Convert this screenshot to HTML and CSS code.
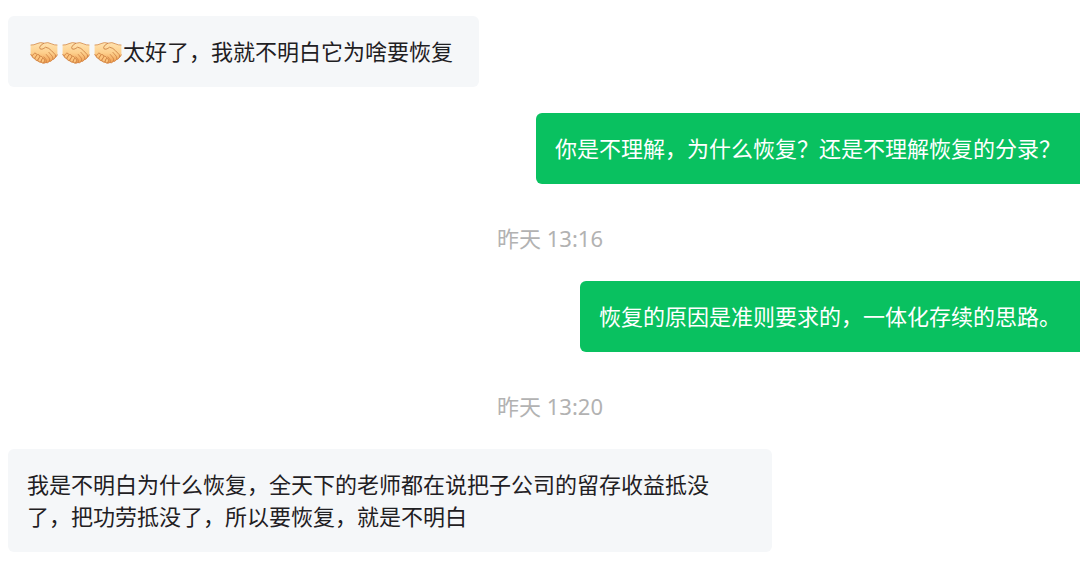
FILE: index.html
```html
<!DOCTYPE html>
<html lang="zh-CN">
<head>
  <meta charset="UTF-8" />
  <meta name="viewport" content="width=device-width, initial-scale=1.0"/>
  <title>聊天记录</title>
  <link rel="stylesheet" href="styles.css">
</head>
<body>
  <!-- handshake emoji, reused in messages -->
  <svg class="defs" width="0" height="0" aria-hidden="true">
    <defs>
      <linearGradient id="skin" x1="0" y1="0" x2="0" y2="1">
        <stop offset="0" stop-color="#ffe3b0"/>
        <stop offset="0.5" stop-color="#fdcf8c"/>
        <stop offset="1" stop-color="#f09a4a"/>
      </linearGradient>
    </defs>
    <symbol id="handshake" viewBox="0 0 28 22">
      <path d="M.6 3 Q4 3.2 7 1.6 Q10.5 -.2 14 1.2 Q18 -.2 21.5 1.8 Q24.2 3.2 27.4 3 V12.5 Q26.8 14.8 25 15.6 Q24.4 17.6 22.4 17.6 Q21.4 19.8 19.2 19.4 Q18 21.4 15.8 20.6 Q13.8 21.8 12.2 20.8 Q10 21.4 9 19.6 Q6.6 19.8 6 17.4 Q3.6 17.4 3.4 15 Q1.2 14.4 .6 12 Z" fill="url(#skin)"/>
      <path d="M.6 3 Q4 3.2 7 1.6 Q10.5 -.2 14 1.2 Q18 -.2 21.5 1.8 Q24.2 3.2 27.4 3" fill="none" stroke="#d38a4c" stroke-width=".8"/>
      <path d="M.6 12 Q1.2 14.4 3.4 15 M25 15.6 Q24.4 17.6 22.4 17.6 Q21.4 19.8 19.2 19.4 Q18 21.4 15.8 20.6 Q13.8 21.8 12.2 20.8 M27.4 12.5 Q26.8 14.8 25 15.6" fill="none" stroke="#cf7a35" stroke-width=".8"/>
      <path d="M14 1.2 Q10.8 2.6 9.6 5.2 Q9.6 7.8 12 7.2 Q14 6.6 15.6 5.2 Q19 5.8 21.6 8.8 L25.2 12.6 Q26 14.2 25 15.6" fill="none" stroke="#c67a3e" stroke-width=".8"/>
      <path d="M18.6 10 L22.2 14.2 Q23.4 16.2 22.4 17.6 M16 12.2 L19.2 16 Q20.2 18 19.2 19.4 M13.6 14.6 L16 17.6 Q16.8 19.4 15.8 20.6" fill="none" stroke="#c67a3e" stroke-width=".7"/>
      <g fill="#fdc47c" stroke="#c67a3e" stroke-width=".7">
        <rect x="2.8" y="11" width="3.6" height="5.4" rx="1.8" transform="rotate(35 4.6 13.7)"/>
        <rect x="5.6" y="12.4" width="3.6" height="6.2" rx="1.8" transform="rotate(32 7.4 15.5)"/>
        <rect x="8.6" y="14.2" width="3.4" height="6" rx="1.7" transform="rotate(28 10.3 17.2)"/>
        <rect x="11.4" y="16.6" width="3" height="4.4" rx="1.5" transform="rotate(22 12.9 18.8)"/>
      </g>
    </symbol>
  </svg>

  <main class="chat">
    <div class="bubble left">
      <span class="emojis" role="img" aria-label="握手 握手 握手">
        <svg class="emoji"><use href="#handshake"/></svg>
        <svg class="emoji"><use href="#handshake"/></svg>
        <svg class="emoji"><use href="#handshake"/></svg>
      </span>
      <p>太好了，我就不明白它为啥要恢复</p>
    </div>

    <div class="bubble right">
      <p>你是不理解，为什么恢复？还是不理解恢复的分录？</p>
    </div>

    <time class="time">昨天 13:16</time>

    <div class="bubble right">
      <p>恢复的原因是准则要求的，一体化存续的思路。</p>
    </div>

    <time class="time">昨天 13:20</time>

    <div class="bubble left long">
      <p>我是不明白为什么恢复，全天下的老师都在说把子公司的留存收益抵没<br>了，把功劳抵没了，所以要恢复，就是不明白</p>
    </div>
  </main>
</body>
</html>
```
FILE: styles.css
```css
body {
  font-family: 'Noto Sans', 'Noto Sans CJK SC', sans-serif;
  font-size: 22px;
  line-height: 32px;
  background: white;
  color: #1f2023;
  margin: 0;
}
p {
  margin: 0;
}
.defs {
  position: absolute;
}
.chat {
  display: flex;
  flex-direction: column;
  gap: 26px;
  padding: 16px 0 22px 8px;
}
.bubble {
  display: flex;
  align-items: center;
  box-sizing: border-box;
  padding: 19px 19px 20px;
  border-radius: 6px;
}
.left {
  align-self: flex-start;
  background: #f5f7f9;
  padding-right: 26px;
}
.right {
  align-self: flex-end;
  background: #09c160;
  color: white;
  border-radius: 6px 0 0 6px;
}
.long {
  width: 72%;
  max-width: 764px;
}
.emojis {
  display: flex;
  gap: 4px;
  padding: 3px 1px 0 3px;
}
.emoji {
  width: 28px;
  height: 22px;
}
.time {
  align-self: center;
  padding: 12px 0 1px 12px;
  color: #b2b2b2;
}
```
